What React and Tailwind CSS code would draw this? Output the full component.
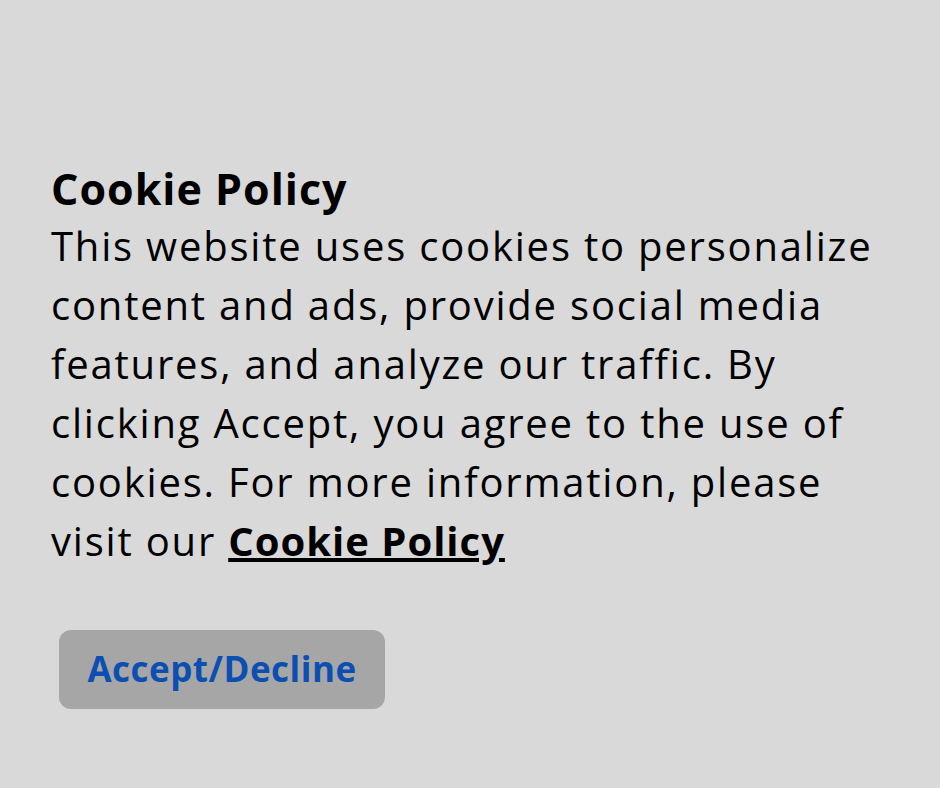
export default function App() {
  return (
    <div className="w-[940px] h-[788px] bg-[#d9d9d9] overflow-hidden font-['Open_Sans',sans-serif]">
      <div className="pl-[51px] pt-[162px]">
        <h1 className="text-[43px] leading-[54px] tracking-[1px] font-bold text-black">Cookie Policy</h1>
        <p className="text-[40px] leading-[59px] tracking-[1.8px] text-black">
          This website uses cookies to personalize<br />
          content and ads, provide social media<br />
          features, and analyze our traffic. By<br />
          clicking Accept, you agree to the use of<br />
          cookies. For more information, please<br />
          visit our <a href="#" className="font-bold underline tracking-[1px]">Cookie Policy</a>
        </p>
        <button className="mt-[60px] ml-[8px] w-[326px] h-[79px] rounded-[12px] bg-[#a6a6a6] text-[#0c4fb2] text-[35px] tracking-[0.5px] font-bold">
          Accept/Decline
        </button>
      </div>
    </div>
  );
}
